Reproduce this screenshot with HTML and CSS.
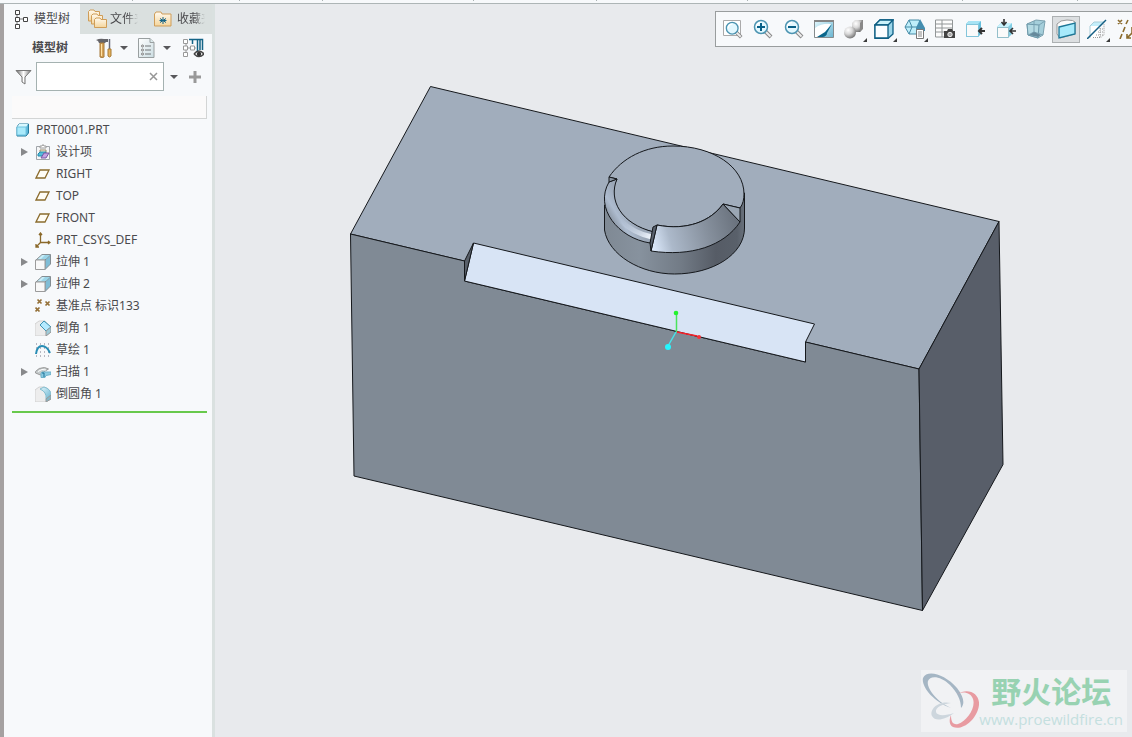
FILE: index.html
```html
<!DOCTYPE html>
<html lang="zh-CN">
<head>
<meta charset="utf-8">
<title>PRT0001.PRT</title>
<link rel="stylesheet" href="styles.css">
</head>
<body>
<svg class="defs" width="0" height="0" aria-hidden="true">
  <defs>
    <linearGradient id="cyan" x1="0" y1="0" x2="1" y2="1"><stop offset="0" stop-color="#e4f8fd"/><stop offset="1" stop-color="#68b4d0"/></linearGradient>
    <linearGradient id="paper" x1="0" y1="0" x2="1" y2="1"><stop offset="0" stop-color="#ffffff"/><stop offset="1" stop-color="#cbdde2"/></linearGradient>
    <linearGradient id="gold" x1="0" y1="0" x2="0" y2="1"><stop offset="0" stop-color="#fffaf0"/><stop offset="1" stop-color="#f4d59c"/></linearGradient>
    <linearGradient id="steel" x1="0" y1="0" x2="1" y2="0"><stop offset="0" stop-color="#666"/><stop offset=".5" stop-color="#fff"/><stop offset="1" stop-color="#777"/></linearGradient>
    <radialGradient id="ball" cx=".35" cy=".3" r=".75"><stop offset="0" stop-color="#fff"/><stop offset=".45" stop-color="#d8d8d8"/><stop offset="1" stop-color="#707070"/></radialGradient>
    <symbol id="plane" viewBox="0 0 16 16"><path d="M5 4h9l-4 8H1z" fill="#fffdf5" stroke="#8b6c2e" stroke-width="1.3"/></symbol>
    <symbol id="extrude" viewBox="0 0 16 16"><path d="M1 6 7 .5h8.500L10 6z" fill="#c8edf8" stroke="#848d92"/><path d="m10 6 5.500-5v9L10 15.500z" fill="#7fbdd6" stroke="#848d92"/><path d="m6 5 4-4h5l-4 4z" fill="#9bd5e8"/><path d="M.5 6h9.500v9.500H.5z" fill="#f8f8f8" stroke="#9b9b9b"/></symbol>
    <symbol id="lens" viewBox="0 0 20 20"><path d="m12 12 6 6" stroke="#888" stroke-width="4"/><path d="m12 12 5.500 5.500" stroke="#efefef" stroke-width="2"/><circle cx="8" cy="8" r="6.500" fill="#e3f8ff" stroke="#4c94b1" stroke-width="1.500"/><path d="M3.500 8A4.500 4.500 0 0 1 8 3.500" fill="none" stroke="#fff" stroke-width="1.500"/></symbol>
  </defs>
</svg>
<div class="app">
  <div class="ribbon">
    <svg width="100%" height="3" aria-hidden="true"><path d="M132.500 0v1M239.500 0v1M322.500 0v1M473.500 0v1M596.500 0v1M747.500 0v1M962.500 0v1M1077.500 0v1" stroke="#aab3b4"/></svg>
  </div>
  <div class="workspace">
    <aside class="sidebar">
      <div class="tabs" role="tablist">
        <button class="tab active" role="tab" aria-selected="true">
          <svg width="14" height="20" viewBox="0 0 14 20"><path d="M3 5v3M3 12v3M5 10h4" stroke="#777"/><path d="M1.500 1.500h4v4h-4zM1.500 8.500h4v4h-4zM1.500 15.500h4v4h-4zM9.500 8.500h4v4h-4z" fill="#fff" stroke="#444"/></svg><span>模型树</span>
        </button>
        <button class="tab folders" role="tab" aria-selected="false">
          <svg width="19" height="20" viewBox="0 0 19 20" fill="url(#gold)" stroke="#cf9d58"><path d="M.5 2.500v9.500h11V2.500H7L6 1H2z"/><path d="M3.500 6.500V15h11V6.500H10L9 5H5z"/><path d="M6.500 10.500v8h12v-8H13L12 9H8z"/></svg><span class="fade">文件夹</span>
        </button>
        <button class="tab favs" role="tab" aria-selected="false">
          <svg width="18" height="16" viewBox="0 0 18 16"><path d="M.5 3v12h16.500V3H8L7 1H2z" fill="url(#gold)" stroke="#cf9d58"/><path d="M9 6v7M6 7.500l6 4M12 7.500l-6 4M5.500 9.500h7" stroke="#126386"/></svg><span class="fade">收藏夹</span>
        </button>
      </div>
      <div class="tree-head">
        <h1>模型树</h1>
        <button class="icon-btn" aria-label="设置"><svg width="18" height="20" viewBox="0 0 18 20"><path d="M1 2q4-2 8-1h4v3h-2l-1 1H4L3 3z" fill="#65656a"/><path d="M5 5h4v14q-2 1-4 0z" fill="#d8a357" stroke="#a67a3c"/><path d="M6.500 6v12" stroke="#ffe2a5"/><path d="M14.500 1v10" stroke="#666978" stroke-width="1.500"/><path d="M13 11h3v7q-1.500 2-3 0z" fill="#e7b35e" stroke="#a67a35"/></svg></button>
        <button class="caret" aria-label="设置菜单"></button>
        <button class="icon-btn" aria-label="显示"><svg width="17" height="20" viewBox="0 0 17 20"><path d="M.5.5H12l4 4v15H.5z" fill="url(#paper)" stroke="#999fa0"/><path d="M12 .5v4h4" fill="#dcebed" stroke="#999fa0"/><path d="M7 8h6M7 12h6M7 16h6" stroke="#737779"/><g fill="#fff" stroke="#777"><circle cx="4.500" cy="8" r="1"/><circle cx="4.500" cy="12" r="1"/><circle cx="4.500" cy="16" r="1"/></g></svg></button>
        <button class="caret" aria-label="显示菜单"></button>
        <button class="icon-btn columns" aria-label="树列"><svg width="21" height="20" viewBox="0 0 21 20"><path d="M3 5v3M3 12v3M5 10h3M10 10h3" stroke="#999"/><path d="M.5 1.500h4v4h-4zM.5 8h4v4h-4zM.5 14.500h4v4h-4zM7.500 8h4v4h-4z" fill="#fff" stroke="#999"/><path d="M6 1.500h3.500V6M10 1.500h4.500V13M14 1.500h5.500V12M17 1.500V12" fill="none" stroke="#146486" stroke-width="1.500"/><path d="M11 16q5-6 10 0-5 5-10 0" fill="#eee" stroke="#444" stroke-width="1.500"/><circle cx="16" cy="16" r="2.200" fill="#333"/></svg></button>
      </div>
      <div class="filter">
        <svg width="17" height="16" viewBox="0 0 17 16"><path d="M1 1.500h15L10 8v7L7 13V8z" fill="url(#steel)" stroke="#777"/></svg>
        <div class="search"><input type="text" aria-label="过滤"><button aria-label="清除"><svg width="9" height="9" viewBox="0 0 9 9"><path d="m1 1 7 7M8 1 1 8" stroke="#969696" stroke-width="1.500"/></svg></button></div>
        <button class="caret" aria-label="过滤菜单"></button>
        <button class="plus" aria-label="添加"><svg width="12" height="12" viewBox="0 0 12 12"><path d="M6 0v12M0 6h12" stroke="#999" stroke-width="3"/></svg></button>
      </div>
      <div class="column-head"></div>
      <ul class="tree">
        <li class="root"><svg width="16" height="16" viewBox="0 0 16 16"><path d="m2 5 2-3h9.500v9L11 14H2z" fill="#5bb5d8" stroke="#257a9c"/><path d="m3 4 1-2h9l-2 3H2z" fill="#d8f8ff"/><path d="M2 5h9v8H2z" fill="#aaeafb" stroke="#71c3df"/></svg>PRT0001.PRT</li>
        <li><i class="arrow"></i><svg width="16" height="16" viewBox="0 0 16 16"><path d="M1.500 2.500h13v13h-13z" fill="#f5f6f7" stroke="#a0a5aa"/><path d="M5 4V2h2q1-3 2 0h2v2z" fill="#fff" stroke="#999"/><path d="M5 6h6v4H5z" fill="#faf2d9" stroke="#988b6c"/><path d="m3 10 2-2h6l-2 4H3z" fill="#55bcda" stroke="#218aab"/><path d="m6 14 3-5h5l-3 5z" fill="#c3a1e1" stroke="#7956a4"/></svg>设计项</li>
        <li><i></i><svg width="16" height="16"><use href="#plane"/></svg>RIGHT</li>
        <li><i></i><svg width="16" height="16"><use href="#plane"/></svg>TOP</li>
        <li><i></i><svg width="16" height="16"><use href="#plane"/></svg>FRONT</li>
        <li><i></i><svg width="16" height="16" viewBox="0 0 16 16"><path d="M5.500 1v9.500H15M5.500 10.500 1 15M4 3l1.500-2L7 3M13 9l2 1.500-2 1.500M1 12v3h3" fill="none" stroke="#8a6829" stroke-width="1.300"/></svg>PRT_CSYS_DEF</li>
        <li><i class="arrow"></i><svg width="16" height="16"><use href="#extrude"/></svg>拉伸 1</li>
        <li><i class="arrow"></i><svg width="16" height="16"><use href="#extrude"/></svg>拉伸 2</li>
        <li><i></i><svg width="16" height="16" viewBox="0 0 16 16"><path d="m2.500 1.500 4 4M6.500 1.500l-4 4M10.500 3.500l4 4M14.500 3.500l-4 4M.5 9.500l4 4M4.500 9.500l-4 4" stroke="#947038" stroke-width="1.700"/></svg>基准点 标识133</li>
        <li><i></i><svg width="16" height="16" viewBox="0 0 16 16"><path d="M0 4 4 1h6l6 6v5l-5 4H0z" fill="#ececec" stroke="#d1d1d1"/><path d="m5 5 4-4 7 6-5 4z" fill="#b5eaff" stroke="#3e95b5"/><path d="m11 11 5-4v5l-5 4z" fill="#9dcbd8" stroke="#999"/></svg>倒角 1</li>
        <li><i></i><svg width="16" height="16" viewBox="0 0 16 16"><path d="M1 2h14M1 6h14M1 10h14M1 14h14" stroke="#778" stroke-width="1" stroke-dasharray="1 3"/><path d="M1 12Q2 4 7 4t8 7" fill="none" stroke="#278db5" stroke-width="2"/></svg>草绘 1</li>
        <li><i class="arrow"></i><svg width="16" height="16" viewBox="0 0 16 16"><path d="M.5 7.500q3-4 9-4l4 1.500-5 3v4l-3-1-5-2z" fill="#c5cbcc" stroke="#999"/><path d="m3 7.500 4-2 4 .5" fill="none" stroke="#fff"/><path d="M7 8h9v2.500l-5 1-1 2H6V9z" fill="#8ccbe2" stroke="#6fb1c9"/><path d="M7 9h2v4" fill="none" stroke="#1b7195"/></svg>扫描 1</li>
        <li><i></i><svg width="16" height="16" viewBox="0 0 16 16"><path d="M0 4 4 1h5q7 2 7 8v4l-5 3H0z" fill="#ededed" stroke="#d1d1d1"/><path d="m5 3 4-2q7 2 7 8l-5 4Q12 6 5 3z" fill="url(#cyan)" stroke="#83bdd0"/><path d="m11 13 5-4v4l-5 3z" fill="#82b7c7" stroke="#999"/></svg>倒圆角 1</li>
      </ul>
    </aside>
    <main class="viewport">
      <svg class="model" viewBox="215 4 917 733" preserveAspectRatio="xMinYMin meet" role="img" aria-label="三维模型">
        <defs>
          <linearGradient id="side" gradientUnits="userSpaceOnUse" x1="604" y1="0" x2="744" y2="0"><stop offset="0" stop-color="#7f8994"/><stop offset=".25" stop-color="#87929e"/><stop offset=".55" stop-color="#727b86"/><stop offset=".8" stop-color="#565c66"/><stop offset=".95" stop-color="#59606a"/><stop offset="1" stop-color="#68707b"/></linearGradient>
          <linearGradient id="chamfer" gradientUnits="userSpaceOnUse" x1="651" y1="240" x2="740" y2="215"><stop offset="0" stop-color="#dce9fb"/><stop offset=".2" stop-color="#acb9ca"/><stop offset=".6" stop-color="#87919e"/><stop offset="1" stop-color="#666e79"/></linearGradient>
          <linearGradient id="round" gradientUnits="userSpaceOnUse" x1="608" y1="222" x2="628" y2="210"><stop offset="0" stop-color="#7e8894"/><stop offset=".5" stop-color="#aebccf"/><stop offset="1" stop-color="#9ba7b7"/></linearGradient>
          <linearGradient id="shine" gradientUnits="userSpaceOnUse" x1="622" y1="215" x2="652" y2="238"><stop offset="0" stop-color="#c6d5ec" stop-opacity="0"/><stop offset="1" stop-color="#f3f8ff"/></linearGradient>
        </defs>
        <g stroke="#15181c" stroke-width="1" stroke-linejoin="round">
          <path d="M430.500 86.500 999 221.500l-80 147.500L350.500 234z" fill="#a1adbc"/>
          <path d="m350.500 234 114 27v20l341 81v-20l113.500 27 3.500 241.500-568.500-134.500z" fill="#808a95"/>
          <path d="m999 221.500 4 243-80.500 146-3.500-241.500z" fill="#585e69"/>
          <path d="m473.500 243 341 81-9 18v20l-341-81z" fill="#d8e4f5"/>
          <path d="m464.500 261 9-18-9 38z" fill="#59606a"/>
          <path d="M604.500 205v25c4 25 36 44 70 44 39 0 70-20 70-46v-35z" fill="url(#side)"/>
          <path d="M609 177c13-19 36-31 64-31 40 0 71 21 71 48 0 5-1 10-4 14l-17-4c-12 17-36 27-66 21l-3 7c-27-5-43-25-41-45l4-8z" fill="#a1adbc"/>
          <path d="m609 182 8-3c-9 21 4 45 37 53l-4 11c-32-5-56-35-41-61z" fill="url(#round)"/>
          <path d="M620 220c8 8 18 14 32 17" fill="none" stroke="url(#shine)" stroke-width="5"/>
          <path d="M609 177v5l8-3z" fill="#8a95a3"/>
          <path d="M657 225c30 6 54-4 66-21l17 18c-16 24-49 35-89 29z" fill="url(#chamfer)"/>
          <path d="m723 204 17 4v14z" fill="#9aa6b4"/>
          <path d="m657 225-4 2-3 16 1 8z" fill="#59616d"/>
        </g>
        <path d="M676.500 332v-18" stroke="#4be35c" stroke-width="1.500"/><circle cx="676" cy="313" r="2.300" fill="#22f32d"/>
        <path d="m677 332 20 4" stroke="#fb2028" stroke-width="1.500"/><circle cx="699" cy="337" r="2" fill="#fb3038"/>
        <path d="m676 332-8 14" stroke="#46e3e9" stroke-width="1.500"/><circle cx="668" cy="347" r="3" fill="#24f7ff"/>
      </svg>
      <div class="toolbar" role="toolbar">
        <button aria-label="重新调整"><svg width="20" height="20" viewBox="0 0 20 20"><path d="M.5 1.500h17v15H.5z" fill="#fff" stroke="#aaa"/><use href="#lens" x="2" y="2" width="18" height="18"/></svg></button>
        <button aria-label="放大"><svg width="20" height="20" viewBox="0 0 20 20"><use href="#lens"/><path d="M8 4v8M4 8h8" stroke="#086087" stroke-width="2"/></svg></button>
        <button aria-label="缩小"><svg width="20" height="20" viewBox="0 0 20 20"><use href="#lens"/><path d="M4 8h8" stroke="#086087" stroke-width="2"/></svg></button>
        <button aria-label="重画"><svg width="20" height="20" viewBox="0 0 20 20"><path d="M.5 1.500h19v17H.5z" fill="url(#cyan)" stroke="#858b8d"/><path d="M1 9q7-5 16-4l-6 9-7 4H1z" fill="#fff"/><path d="M0 2h20" stroke="#858585" stroke-width="2"/><path d="m18 5-7 8-8 5h6q4-1 4-4z" fill="#09668b"/></svg></button>
        <button class="menu" aria-label="渲染"><svg width="20" height="20" viewBox="0 0 20 20"><path d="m8 4 3-3h8v8l-3 4H8z" fill="url(#ball)"/><path d="m16 4 3-3v9l-3 3z" fill="#888"/><circle cx="6" cy="13.500" r="6" fill="url(#ball)"/></svg></button>
        <button class="menu" aria-label="显示样式"><svg width="20" height="20" viewBox="0 0 20 20"><path d="m1 6 5-5h13v14l-5 4.500H1z" fill="#9bd5e9" stroke="#0c5e83" stroke-width="1.300"/><path d="m1 6 5-5h13l-5 5z" fill="#c9f2fa" stroke="#0c5e83" stroke-width="1.300"/><path d="M1 6h13v13H1z" fill="#fafdff" stroke="#0c5e83" stroke-width="1.300"/></svg></button>
        <button class="menu" aria-label="已保存方向"><svg width="22" height="22" viewBox="0 0 22 22"><path d="m1 9 4-7h10l4 7-4 7H5z" fill="#bfeefa" stroke="#448aa5"/><path d="M1 9h12M5 2l3 7-3 7" fill="none" stroke="#448aa5"/><path d="m16 1 5 9v3H12v-3z" fill="#448eb0"/><path d="M12.500 11.500h7v9h-7z" fill="#fff" stroke="#777"/><path d="M14 14h4M14 16h4M14 18h4" stroke="#888"/></svg></button>
        <button aria-label="视图管理器"><svg width="20" height="20" viewBox="0 0 20 20"><path d="M.5 1h17v17H.5zM1 5h16M1 9h16M1 13h16M7 1v17" fill="#fcfcfc" stroke="#929697"/><path d="M9 12h3l1-2h4l1 2h2v7H9z" fill="#444"/><circle cx="15" cy="15.500" r="2.200" fill="#aaa" stroke="#eee"/></svg></button>
        <button aria-label="前视图"><svg width="20" height="20" viewBox="0 0 20 20"><path d="m1 5 3-3h12v13l-3 3H1z" fill="#67bfdc"/><path d="M1 5 4 2h12l-3 3z" fill="#a7e3f4"/><path d="M1.500 5.500h12v12h-12z" fill="#fafafa" stroke="#83c5da"/><path d="M20 12h-5M17 9l-3 3 3 3" fill="none" stroke="#333" stroke-width="2"/></svg></button>
        <button aria-label="正交视图"><svg width="20" height="20" viewBox="0 0 20 20"><path d="m1 8 4-4h11v11l-4 4H1z" fill="#83cee4"/><path d="m1 8 4-4h11l-4 4z" fill="#c9f2fc"/><path d="M1.500 8.500h11v10h-11z" fill="#fafafa" stroke="#94bfca"/><path d="M8 0v5M5.500 3 8 6l2.500-3M20 12h-5M17 9l-3 3 3 3" fill="none" stroke="#333" stroke-width="1.600"/></svg></button>
        <button aria-label="透视图"><svg width="20" height="20" viewBox="0 0 20 20"><path d="m1 5 9-4 9 1-2 14-5 3-10-3z" fill="#a5cfdb" stroke="#7ba1ae"/><path d="m1 5 12 1-1 13-10-3z" fill="#bee1e8" fill-opacity=".6" stroke="#6c98aa"/><path d="m13 6 6-4M8 2v11l-6 3M8 13l9 3" fill="none" stroke="#7aa3b4"/><path d="m3 16 5-3 7 3-3 2z" fill="#65899b"/></svg></button>
        <button class="selected" aria-label="剖面" aria-pressed="true"><svg width="20" height="20" viewBox="0 0 20 20"><path d="M1 5q3-4 10-4t8 2v12L4 19l-3-4z" fill="#fbfbfb" stroke="#999"/><path d="m3 8 16-4v11L3 19z" fill="#a7eafb" stroke="#1c7696" stroke-width="1.300"/></svg></button>
        <button class="menu" aria-label="注释显示"><svg width="20" height="20" viewBox="0 0 20 20"><path d="m3 7 4-4h10L7 13v6H3z" fill="#c4eefa"/><path d="M3 7h10v12H3z" fill="#fff"/><path d="M3 19V7l4-4h10" fill="none" stroke="#a9cdd8"/><path d="M6 18.500h8l3-3V5M9 16h7M11 13h5M13 10h3M13 18V8" fill="none" stroke="#999" stroke-dasharray="1 1"/><path d="M0 20 19 1" stroke="#155f84" stroke-width="1.500"/></svg></button>
        <button aria-label="基准显示"><svg width="20" height="20" viewBox="0 0 20 20"><path d="m1 1 4 4M5 1 1 5M11 1l-2 4M8 8l-2 5M5 15l-2 5M15 8v6h5M15 14l-5 5M10 15v4h4" fill="none" stroke="#8b6b2d" stroke-width="1.600"/></svg></button>
      </div>
      <div class="watermark">
        <svg width="58" height="62" viewBox="0 0 58 62"><path d="M30 38C12 32 0 16 2 8 6-1 24 4 36 18c7 9 8 16 4 20 0-8-4-16-11-23C20 6 9 5 7 11c-2 7 9 21 23 27z" fill="#a5b6c4"/><path d="M30 33c-12-3-22 6-19 13 3 6 13 4 22-3-9 3-17 3-18-1-1-5 7-8 15-9z" fill="#cdd6dd"/><path d="M36 24c12-7 23 0 22 11-2 15-17 26-26 22-4-2-4-7-2-12 0 7 2 10 7 9 9-3 18-16 15-25-2-6-9-8-16-5z" fill="#e89ba1"/></svg>
        <div class="brand"><strong>野火论坛</strong><span>www.proewildfire.cn</span></div>
      </div>
    </main>
  </div>
</div>
</body>
</html>
```
FILE: styles.css
```css
* { box-sizing: border-box; }
body {
  margin: 0;
  font: 12px/22px "Noto Sans", "Noto Sans CJK SC", sans-serif;
  color: #4a4a4d;
  background: #e8eaed;
}
button { font: inherit; color: inherit; border: 0; padding: 0; background: none; }
svg { display: block; flex: none; }
.defs { position: absolute; }
.app { display: flex; flex-direction: column; min-height: 100vh; }
.ribbon { height: 4px; background: #f7f9fb; border-bottom: 1px solid #adb5b6; }
.workspace { flex: 1; display: flex; overflow: hidden; }

.sidebar {
  flex: none;
  width: 215px;
  border-left: 4px solid #a5a1a1;
  border-right: 3px solid #dae1e0;
  background: #f7f9fb;
}
.tabs { display: flex; height: 30px; background: #dae0df; }
.tab { display: flex; align-items: center; white-space: nowrap; overflow: hidden; }
.tab.active { width: 76px; padding-left: 10px; gap: 6px; background: #f7f9fb; }
.tab.folders { width: 66px; padding-left: 8px; gap: 3px; }
.tab.favs { flex: 1; padding-left: 8px; gap: 5px; }
.fade {
  width: 28px;
  overflow: hidden;
  -webkit-mask-image: linear-gradient(to right, #000 60%, transparent);
  mask-image: linear-gradient(to right, #000 60%, transparent);
}
.tree-head { display: flex; align-items: center; height: 28px; padding-left: 28px; }
.tree-head > * { flex: none; }
.tree-head h1 { width: 62px; margin: 0; font-size: 12px; font-weight: 700; }
.icon-btn { width: 22px; padding-left: 1px; }
.caret { width: 16px; height: 16px; display: flex; align-items: center; justify-content: center; }
.caret::before { content: ""; border: 4px solid transparent; border-top-color: #58585b; border-bottom: 0; }
.icon-btn + .caret { margin-right: 5px; }
.columns { margin-left: 2px; }
.filter { display: flex; align-items: center; height: 29px; padding-left: 11px; }
.search { display: flex; align-items: center; width: 128px; height: 29px; margin-left: 4px; border: 1px solid #a5b2b1; background: #fff; }
.search input { flex: 1; min-width: 0; height: 24px; border: 0; outline: 0; background: none; }
.search button { width: 20px; display: flex; justify-content: center; }
.filter .caret { margin-left: 2px; }
.plus { margin-left: 7px; }
.column-head { height: 23px; margin: 5px 5px 0 8px; border-right: 1px solid #d3d5d5; border-bottom: 1px solid #d3d5d5; background: #fbfafa; }
.tree { list-style: none; margin: 0 5px 0 8px; padding: 0 0 6px; border-bottom: 2px solid #68c94c; }
.tree li { display: flex; align-items: center; height: 22px; gap: 5px; white-space: pre; }
.tree .root { padding-left: 3px; }
.tree i { width: 18px; padding-left: 9px; }
.tree .arrow::before { content: ""; display: block; width: 7px; border: 4px solid transparent; border-left: 7px solid #88898b; border-right: 0; }

.viewport { position: relative; flex: 1; min-width: 0; overflow: hidden; background: #e8eaed; }
.model { width: 100%; }
.toolbar {
  position: absolute;
  top: 7px;
  right: -10px;
  width: 427px;
  height: 36px;
  padding: 0 0 0 3px;
  display: flex;
  align-items: center;
  justify-content: space-between;
  border: 1px solid #999d9e;
  background: #f7f9fb;
}
.toolbar button { position: relative; display: flex; flex: none; align-items: center; justify-content: center; width: 28px; height: 27px; }
.toolbar .selected { border: 1px solid #acb0b2; background: #dcdfe1; }
.menu::after { content: ""; position: absolute; right: 1px; bottom: 1px; border: 2px solid #3c3c3c; border-top-color: transparent; border-left-color: transparent; }
.watermark {
  position: absolute;
  right: 5px;
  bottom: 5px;
  display: flex;
  height: 62px;
  background: #f1f2f4;
}
.brand { display: flex; flex-direction: column; padding: 0 4px 0 0; }
.brand strong { padding-left: 12px; font: 700 30px/40px "Noto Sans CJK SC", sans-serif; color: #98d2b2; }
.brand span { font: 15px/18px "Open Sans", sans-serif; color: #c4dfdf; }
```
